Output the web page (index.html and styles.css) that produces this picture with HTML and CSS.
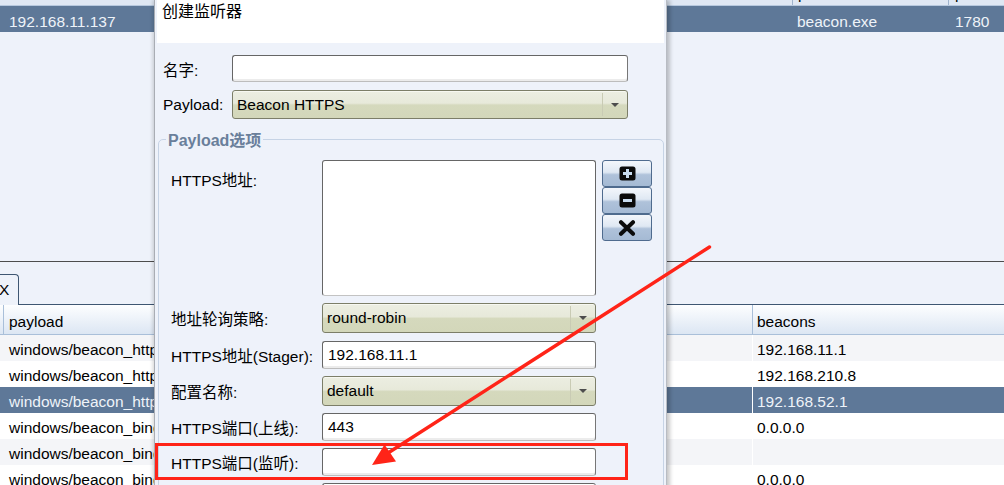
FILE: index.html
```html
<!DOCTYPE html>
<html>
<head>
<meta charset="utf-8">
<link rel="stylesheet" href="styles.css">
</head>
<body>
<div class="app">
  <div class="ttop-head">
    <div class="th th-a"></div>
    <div class="th th-b"><span>process</span></div>
    <div class="th th-c"><span>pid</span></div>
  </div>
  <div class="ttop-row sel">
    <div class="td td-a">192.168.11.137</div>
    <div class="td td-b">beacon.exe</div>
    <div class="td td-c">1780</div>
  </div>
  <div class="fill"></div>
  <div class="tabs">
    <div class="tab">X</div>
    <div class="tabline"></div>
  </div>
  <div class="bhead">
    <div class="bc0"></div>
    <div class="bc1">payload</div>
    <div class="bc2">beacons</div>
  </div>
  <div class="brow odd"><div class="bc0"></div><div class="bc1">windows/beacon_https/reverse_https</div><div class="bc2">192.168.11.1</div></div>
  <div class="brow"><div class="bc0"></div><div class="bc1">windows/beacon_https/reverse_https</div><div class="bc2">192.168.210.8</div></div>
  <div class="brow sel"><div class="bc0"></div><div class="bc1">windows/beacon_https/reverse_https</div><div class="bc2">192.168.52.1</div></div>
  <div class="brow"><div class="bc0"></div><div class="bc1">windows/beacon_bind_pipe</div><div class="bc2">0.0.0.0</div></div>
  <div class="brow odd"><div class="bc0"></div><div class="bc1">windows/beacon_bind_pipe</div><div class="bc2"></div></div>
  <div class="brow"><div class="bc0"></div><div class="bc1">windows/beacon_bind_tcp</div><div class="bc2">0.0.0.0</div></div>
</div>

<div class="dialog">
  <div class="dtitle">创建监听器</div>
  <div class="top-form">
    <div class="frow r-name">
      <label class="lab1">名字:</label>
      <div class="input w1"></div>
    </div>
    <div class="frow r-payload">
      <label class="lab1">Payload:</label>
      <div class="combo w1 c-tall"><span class="cval">Beacon HTTPS</span><span class="cbtn"><i class="tri"></i></span></div>
    </div>
  </div>
  <fieldset class="group">
    <legend>Payload选项</legend>
    <div class="grow r-hosts">
      <label class="lab2 top">HTTPS地址:</label>
      <div class="listbox"></div>
      <div class="btns">
        <div class="ibtn"><svg width="17" height="15" viewBox="0 0 17 15"><rect x="0.5" y="0.5" width="16" height="14" rx="2.5" fill="#0b0b0b"/><path d="M8.5 3v9M4 7.5h9" stroke="#c9dcef" stroke-width="3"/></svg></div>
        <div class="ibtn"><svg width="17" height="15" viewBox="0 0 17 15"><rect x="0.5" y="0.5" width="16" height="14" rx="2.5" fill="#0b0b0b"/><path d="M4 7.5h9" stroke="#c9dcef" stroke-width="3"/></svg></div>
        <div class="ibtn"><svg width="18" height="16" viewBox="0 0 18 16"><path d="M3 2.2l12 11.6M15 2.2L3 13.8" stroke="#0b0b0b" stroke-width="4" stroke-linecap="round"/></svg></div>
      </div>
    </div>
    <div class="grow g7">
      <label class="lab2">地址轮询策略:</label>
      <div class="combo w2"><span class="cval">round-robin</span><span class="cbtn"><i class="tri"></i></span></div>
    </div>
    <div class="grow g8">
      <label class="lab2">HTTPS地址(Stager):</label>
      <div class="input w2 ih"><span class="ival">192.168.11.1</span></div>
    </div>
    <div class="grow g7">
      <label class="lab2">配置名称:</label>
      <div class="combo w2"><span class="cval">default</span><span class="cbtn"><i class="tri"></i></span></div>
    </div>
    <div class="grow g7">
      <label class="lab2">HTTPS端口(上线):</label>
      <div class="input w2 ih"><span class="ival">443</span></div>
    </div>
    <div class="grow g7">
      <label class="lab2">HTTPS端口(监听):</label>
      <div class="input w2 ih"></div>
    </div>
    <div class="grow g7">
      <label class="lab2">HTTPS Host Header:</label>
      <div class="input w2 ih"></div>
    </div>
  </fieldset>
</div>

<div class="redbox"></div>
<svg class="arrow" width="1004" height="485" viewBox="0 0 1004 485">
  <path d="M709.5 247 L388 453" stroke="#ff2418" stroke-width="3.4" stroke-linecap="round"/>
  <polygon points="372,465 384.5,444.5 396,461.5" fill="#ff2418"/>
</svg>
</body>
</html>
```
FILE: styles.css
```css
* { box-sizing: border-box; }
html, body { margin: 0; padding: 0; }
body {
  width: 1004px;
  height: 485px;
  overflow: hidden;
  position: relative;
  background: #eef2fa;
  color: #000;
  font-family: "Liberation Sans", "Noto Sans CJK SC", sans-serif;
  font-size: 15.5px;
}

/* ---------- background app ---------- */
.app {
  display: flex;
  flex-direction: column;
  height: 485px;
}
.ttop-head {
  height: 6px;
  flex: none;
  display: flex;
  overflow: hidden;
  background: #dfe7f3;
  border-bottom: 1px solid #b7c8de;
}
.th { overflow: hidden; }
.th span { display: block; line-height: 18px; margin-top: -15px; }
.th-a { width: 792px; }
.th-b { width: 156px; border-left: 1px solid #9fb3cd; padding-left: 5px; }
.th-c { flex: 1; border-left: 1px solid #9fb3cd; padding-left: 6px; }

.ttop-row {
  height: 26px;
  flex: none;
  display: flex;
  align-items: center;
  padding-top: 5px;
}
.ttop-row.sel { background: #5e7898; color: #eef3f9; }
.td-a { width: 792px; padding-left: 9px; }
.td-b { width: 156px; padding-left: 5px; }
.td-c { flex: 1; padding-left: 7px; }

.fill { height: 230px; flex: none; border-bottom: 1px solid #4d4d4d; }

.tabs {
  height: 43px;
  flex: none;
  display: flex;
  align-items: flex-end;
}
.tab {
  width: 19px;
  height: 31px;
  border: 1px solid #3e5672;
  border-left: none;
  border-bottom: none;
  border-radius: 0 4px 0 0;
  background: #eef2fa;
  line-height: 30px;
  text-indent: -1px;
  overflow: hidden;
}
.tabline { flex: 1; border-bottom: 1px solid #3e5672; }

.bhead {
  height: 30px;
  flex: none;
  display: flex;
  align-items: center;
  background: linear-gradient(#fdfeff, #dce6f3);
  border-bottom: 1px solid #a9bfd9;
  padding-top: 4px;
}
.bhead .bc0 { align-self: stretch; margin-top: -4px; border-right: 1px solid #a9bfd9; }
.bhead .bc2 { align-self: stretch; margin-top: -4px; padding-top: 4px; border-left: 1px solid #a9bfd9; display: flex; align-items: center; }

.bc0 { width: 4px; flex: none; }
.bc1 { width: 748px; flex: none; padding-left: 5px; white-space: nowrap; overflow: hidden; }
.bc2 { flex: 1; padding-left: 4px; }

.brow {
  height: 26px;
  flex: none;
  display: flex;
  align-items: center;
  background: #ffffff;
  padding-top: 3px;
}
.brow .bc2 { align-self: stretch; margin-top: -3px; padding-top: 3px; display: flex; align-items: center; border-left: 1px solid #ffffff; }
.brow.odd { background: #f4f5f8; }
.brow.sel { background: #5e7898; color: #eef3f9; }

/* ---------- dialog ---------- */
.dialog {
  position: absolute;
  left: 154px;
  top: 0;
  width: 513px;
  height: 500px;
  background: #eef2fa;
  border-left: 1px solid #a9adb4;
  border-right: 1px solid #b8bcc3;
  box-shadow: -2px 0 3px rgba(0,0,0,0.12), 3px 0 4px rgba(0,0,0,0.22);
  padding: 0 2px;
}
.dtitle {
  height: 43px;
  background: #ffffff;
  font-size: 16px;
  line-height: 24px;
  padding-left: 5px;
}
.top-form {
  padding: 12px 0 0 6px;
  display: flex;
  flex-direction: column;
  gap: 8px;
}
.frow { display: flex; align-items: center; }
.lab1 { width: 69px; flex: none; }
.w1 { width: 396px; }

.input {
  height: 28px;
  background: #fff;
  border: 1px solid #666;
  border-bottom-color: #bdbdbd;
  border-right-color: #777;
  border-radius: 3px;
  box-shadow: inset 0 -2px 0 #ececec;
  display: flex;
  align-items: center;
  padding-left: 5px;
}
.r-name .input { height: 27px; }

.combo {
  height: 30px;
  border: 1px solid #7c7e68;
  border-radius: 3px;
  background: linear-gradient(#eceee2 0%, #e7e9da 45%, #d5d9bd 52%, #d3d7ba 100%);
  display: flex;
  align-items: center;
  box-shadow: inset 0 1px 0 #f7f8f1;
}
.c-tall { height: 29px; }
.cval { flex: 1; padding-left: 4px; white-space: nowrap; }
.cbtn {
  width: 24px;
  height: calc(100% - 4px);
  margin-right: 1px;
  border-left: 1px solid #c9cbb4;
  border-radius: 0 2px 2px 0;
  display: flex;
  align-items: center;
  justify-content: center;
}
.tri {
  width: 0; height: 0;
  border-left: 4px solid transparent;
  border-right: 4px solid transparent;
  border-top: 4px solid #4d4d4d;
}

/* ---------- group box ---------- */
.group {
  margin: 8px 0 0 1px;
  width: 506px;
  border: 1px solid #c6d3e5;
  border-radius: 5px;
  padding: 9px 0 0 12px;
}
.group legend {
  margin-left: -5px;
  padding: 0 2px;
  font-weight: bold;
  color: #6a7f9b;
  font-size: 16px;
}
.grow { display: flex; align-items: center; }
.g7 { margin-top: 7px; }
.g8 { margin-top: 8px; }
.lab2 { width: 151px; flex: none; white-space: nowrap; }
.lab2.top { align-self: flex-start; padding-top: 8px; }
.w2 { width: 274px; flex: none; }
.r-hosts { align-items: flex-start; }
.listbox {
  width: 274px;
  height: 136px;
  background: #fff;
  border: 1px solid #666;
  border-bottom-color: #c3c3c3;
  border-radius: 3px;
}
.btns {
  margin-left: 6px;
  display: flex;
  flex-direction: column;
}
.ibtn {
  width: 50px;
  height: 27px;
  border: 1px solid #4f6b8e;
  border-radius: 3px;
  background: linear-gradient(#f3f6fb 0%, #dfe8f3 45%, #afc2da 55%, #a5bad4 100%);
  display: flex;
  align-items: center;
  justify-content: center;
}

/* ---------- annotations ---------- */
.redbox {
  position: absolute;
  left: 155px;
  top: 443px;
  width: 473px;
  height: 37px;
  border: 3px solid #ff2418;
}
.arrow {
  position: absolute;
  left: 0;
  top: 0;
  pointer-events: none;
}
```
